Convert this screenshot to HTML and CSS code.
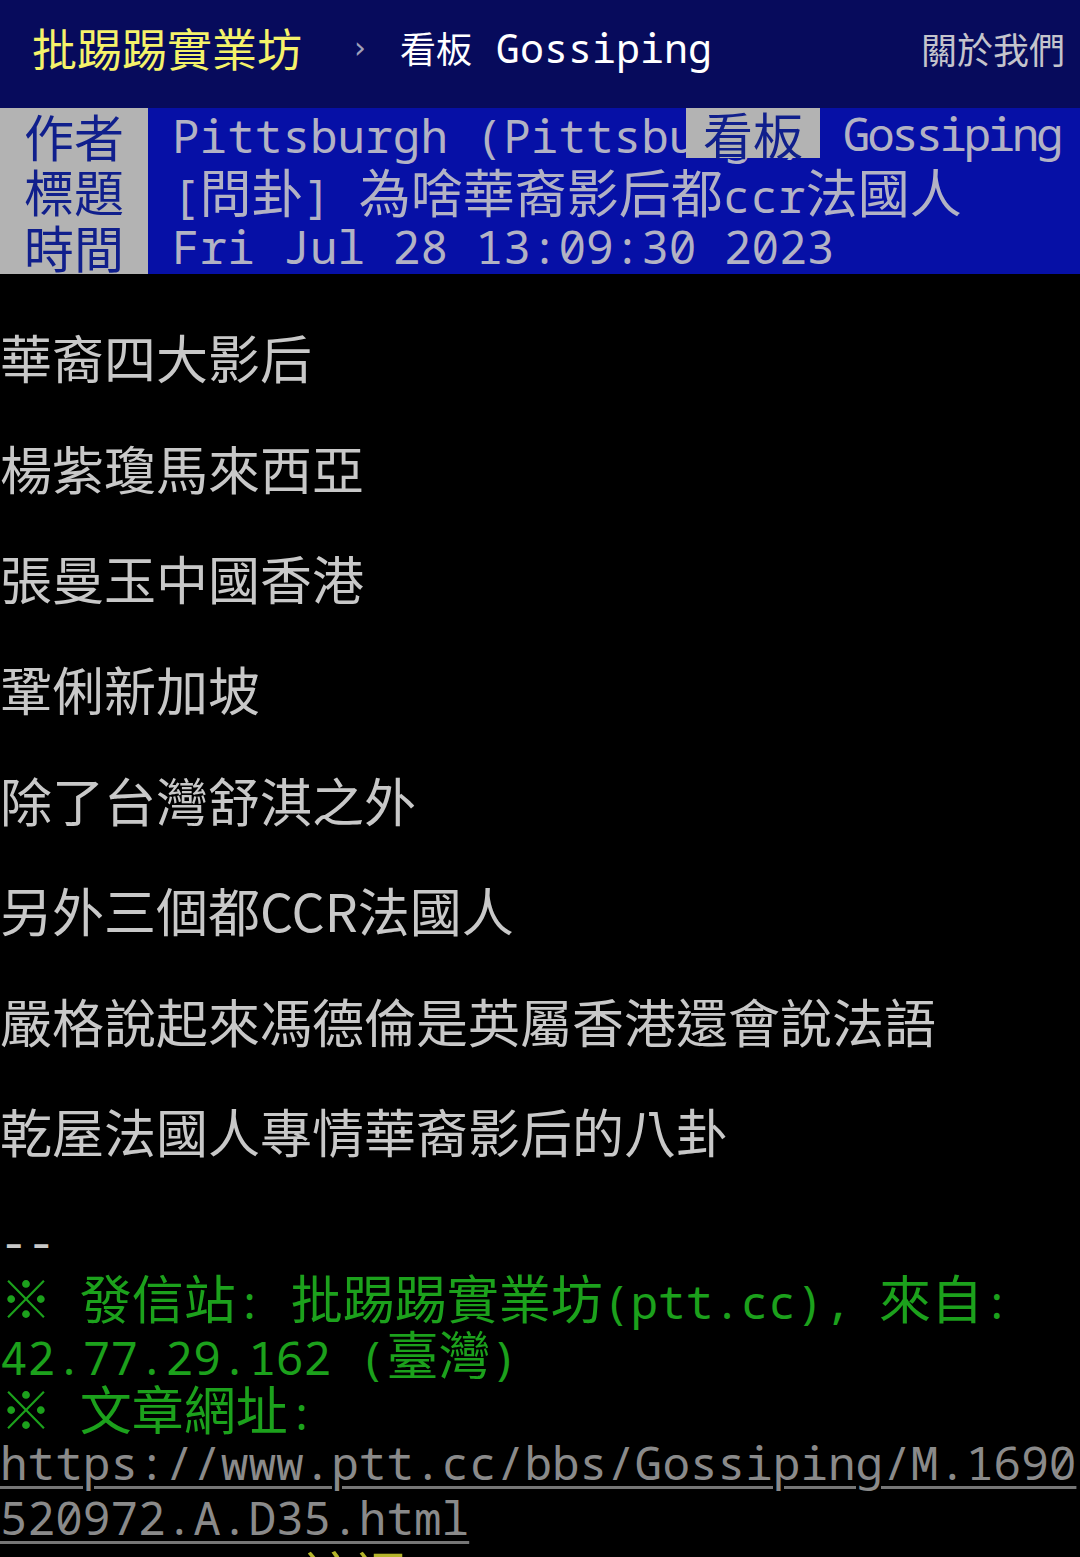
FILE: index.html
```html
<!DOCTYPE html>
<html lang="zh-Hant">
<head>
  <meta charset="UTF-8" />
  <meta name="viewport" content="width=device-width, initial-scale=1.0" />
  <title>[問卦] 為啥華裔影后都ccr法國人 - 看板 Gossiping - 批踢踢實業坊</title>
  <link rel="stylesheet" href="styles.css">
</head>
<body>
  <header class="top-bar">
    <a href="#" class="logo">批踢踢實業坊</a>
    <span class="crumb-sep">›</span>
    <a href="#" class="board"><span class="han">看板</span> Gossiping</a>
    <a href="#" class="about">關於我們</a>
  </header>

  <div class="article-meta">
    <div class="meta-line">
      <span class="meta-tag">作者</span>
      <span class="meta-value">Pittsburgh (Pittsburgh)</span>
    </div>
    <div class="meta-line-right">
      <span class="meta-tag">看板</span>
      <span class="meta-value board-name">Gossiping</span>
    </div>
    <div class="meta-line">
      <span class="meta-tag">標題</span>
      <span class="meta-value">[<span class="han">問卦</span>] <span class="han">為啥華裔影后都</span>ccr<span class="han">法國人</span></span>
    </div>
    <div class="meta-line">
      <span class="meta-tag">時間</span>
      <span class="meta-value">Fri Jul 28 13:09:30 2023</span>
    </div>
  </div>

  <main class="main-content">
    <p>華裔四大影后</p>
    <p>楊紫瓊馬來西亞</p>
    <p>張曼玉中國香港</p>
    <p>鞏俐新加坡</p>
    <p>除了台灣舒淇之外</p>
    <p>另外三個都CCR法國人</p>
    <p>嚴格說起來馮德倫是英屬香港還會說法語</p>
    <p>乾屋法國人專情華裔影后的八卦</p>

    <div class="signature">
      <div class="line">--</div>
      <div class="line f2"><span class="han">※</span> <span class="han">發信站</span>: <span class="han">批踢踢實業坊</span>(ptt.cc), <span class="han">來自</span>:</div>
      <div class="line f2">42.77.29.162 (<span class="han">臺灣</span>)</div>
      <div class="line f2"><span class="han">※</span> <span class="han">文章網址</span>:</div>
      <a href="#" class="url">
        <span class="line">https://www.ptt.cc/bbs/Gossiping/M.1690</span>
        <span class="line">520972.A.D35.html</span>
      </a>
      <div class="line push"><span class="push-tag">H     l ?</span>  <span class="han push-content">這週</span></div>
    </div>
  </main>
</body>
</html>
```

FILE: styles.css
```css
* {
  box-sizing: border-box;
  margin: 0;
  padding: 0;
}

body {
  background: #000000;
  color: #c8c8c8;
  font-family: "Noto Sans Mono", "DejaVu Sans Mono", "Noto Sans CJK TC", monospace;
  font-size: 46px;
  overflow: hidden;
}

a {
  text-decoration: none;
}

.han {
  font-family: "Noto Sans CJK TC", sans-serif;
  font-size: 52px;
}

/* top navigation */
.top-bar {
  display: flex;
  align-items: center;
  height: 108px;
  padding: 0 15px 13px 32px;
  background: #070b5c;
  white-space: nowrap;
}

.logo {
  font-family: "Noto Sans CJK TC", sans-serif;
  font-size: 45px;
  color: #f5f26a;
}

.crumb-sep {
  margin-left: 52px;
  font-family: "DejaVu Sans", sans-serif;
  font-size: 30px;
  color: #a0a0b8;
}

.board {
  margin-left: 34px;
  font-size: 40px;
  color: #ffffff;
}

.board .han {
  font-size: 36px;
}

.about {
  margin-left: auto;
  font-family: "Noto Sans CJK TC", sans-serif;
  font-size: 36px;
  color: #c4c4cc;
}

/* article header */
.article-meta {
  position: relative;
  background: #0610a6;
}

.meta-line {
  display: flex;
  height: 55.3px;
  line-height: 55.3px;
  white-space: pre;
}

.meta-tag {
  font-family: "Noto Sans CJK TC", sans-serif;
  font-size: 50px;
  color: #101f8c;
  background: #b3b3b3;
}

.meta-line .meta-tag {
  width: 148px;
  text-align: center;
}

.meta-value {
  padding-left: 24px;
  color: #b2b2c4;
}

.meta-line-right {
  position: absolute;
  top: 0;
  right: 0;
  display: flex;
  height: 50px;
  line-height: 50px;
  background: #0610a6;
}

.meta-line-right .meta-tag {
  padding: 0 17px;
}

.board-name {
  padding: 0 20px 0 23px;
  letter-spacing: -3.5px;
}

/* article body */
.main-content p {
  margin-top: 55.3px;
  font-family: "Noto Sans CJK TC", sans-serif;
  font-size: 52px;
  line-height: 55.3px;
  color: #c8c8c8;
}

.signature {
  margin-top: 55.3px;
}

.line {
  display: block;
  height: 55.3px;
  line-height: 55.3px;
  white-space: pre;
}

.f2 {
  color: #1ca11c;
}

.url {
  display: block;
  color: #8a8a8a;
  text-decoration: underline;
  text-decoration-color: #767676;
  text-decoration-thickness: 3px;
  text-underline-offset: 6px;
}

.push-tag {
  color: #e0e0e0;
}

.push-content {
  color: #b4b42a;
}
```
